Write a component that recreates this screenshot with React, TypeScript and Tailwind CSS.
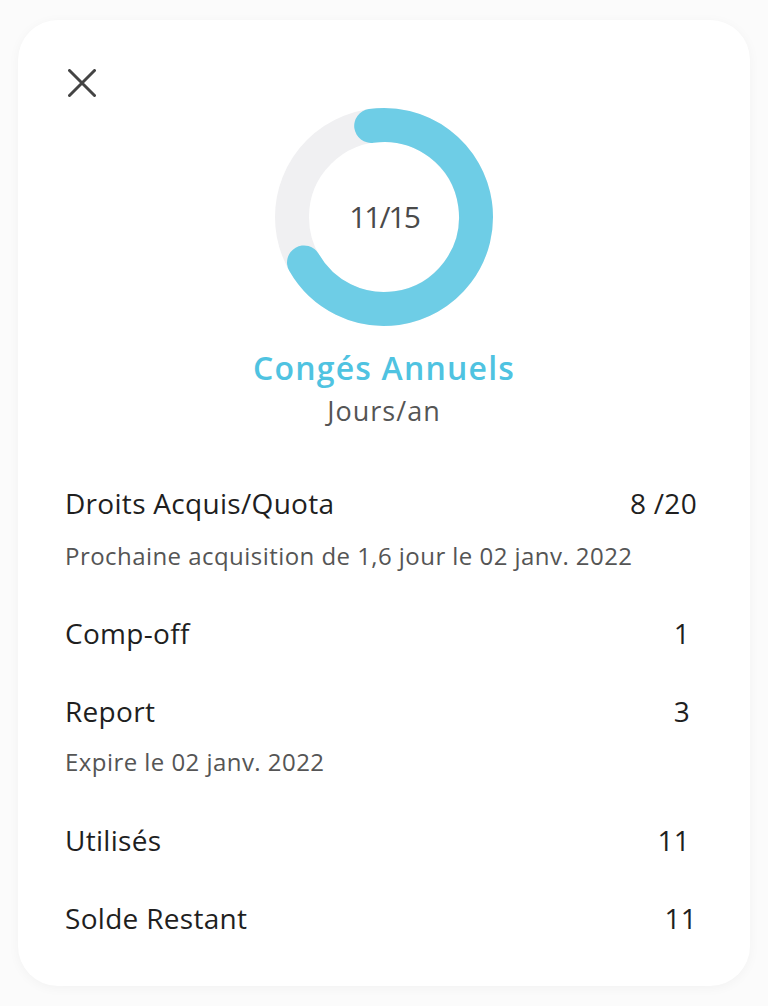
const FONT = { fontFamily: "'Open Sans', Lato, sans-serif" };

function Ring({ used, total }: { used: number; total: number }) {
  const r = 92;
  const c = 2 * Math.PI * r;
  const sweep = 248 / 360;
  return (
    <div className="relative w-[220px] h-[220px]">
      <svg width="220" height="220" viewBox="0 0 220 220">
        <circle cx="110" cy="110" r={r} fill="none" stroke="#f0f0f2" strokeWidth="34" />
        <circle
          cx="110"
          cy="110"
          r={r}
          fill="none"
          stroke="#6ecde6"
          strokeWidth="34"
          strokeLinecap="round"
          strokeDasharray={`${c * sweep} ${c}`}
          transform="rotate(-98 110 110)"
        />
      </svg>
      <div className="absolute inset-0 flex items-center justify-center pb-[2px] text-[30px] tracking-[-2px] text-[#4a4a4a]">
        {used}/{total}
      </div>
    </div>
  );
}

function Row({ label, value, pr, mt }: { label: string; value: string; pr: string; mt: string }) {
  return (
    <div className={`flex items-center justify-between h-[40px] leading-[40px] text-[28px] tracking-[0.3px] text-[#1f1f1f] ${pr} ${mt}`}>
      <span>{label}</span>
      <span>{value}</span>
    </div>
  );
}

function Note({ text, mt }: { text: string; mt: string }) {
  return <div className={`h-[30px] leading-[30px] text-[24px] tracking-[0.45px] text-[#555555] ${mt}`}>{text}</div>;
}

export default function App() {
  return (
    <div className="min-h-[1006px] bg-[#fbfbfb] pt-[20px] px-[18px]" style={FONT}>
      <div className="relative h-[966px] rounded-[40px] bg-white shadow-[0_2px_12px_rgba(0,0,0,0.04)]">
        <svg className="absolute left-[50px] top-[49px]" width="28" height="28" viewBox="0 0 28 28">
          <path d="M1.5 1.5 L26.5 26.5 M26.5 1.5 L1.5 26.5" stroke="#444" strokeWidth="3" strokeLinecap="round" />
        </svg>
        <div className="flex flex-col items-center pt-[87px]">
          <Ring used={11} total={15} />
          <div className="mt-[21px] h-[40px] leading-[40px] text-[32px] font-semibold tracking-[1.2px] text-[#4fc3e1]">Congés Annuels</div>
          <div className="mt-[6px] h-[34px] leading-[34px] text-[27px] tracking-[1px] text-[#555555]">Jours/an</div>
        </div>
        <div className="flex flex-col pl-[47px] mt-[55px]">
          <Row label="Droits Acquis/Quota" value="8 /20" pr="pr-[53px]" mt="" />
          <Note text="Prochaine acquisition de 1,6 jour le 02 janv. 2022" mt="mt-[18px]" />
          <Row label="Comp-off" value="1" pr="pr-[60px]" mt="mt-[42px]" />
          <Row label="Report" value="3" pr="pr-[60px]" mt="mt-[38px]" />
          <Note text="Expire le 02 janv. 2022" mt="mt-[16px]" />
          <Row label="Utilisés" value="11" pr="pr-[60px]" mt="mt-[43px]" />
          <Row label="Solde Restant" value="11" pr="pr-[53px]" mt="mt-[38px]" />
        </div>
      </div>
    </div>
  );
}
